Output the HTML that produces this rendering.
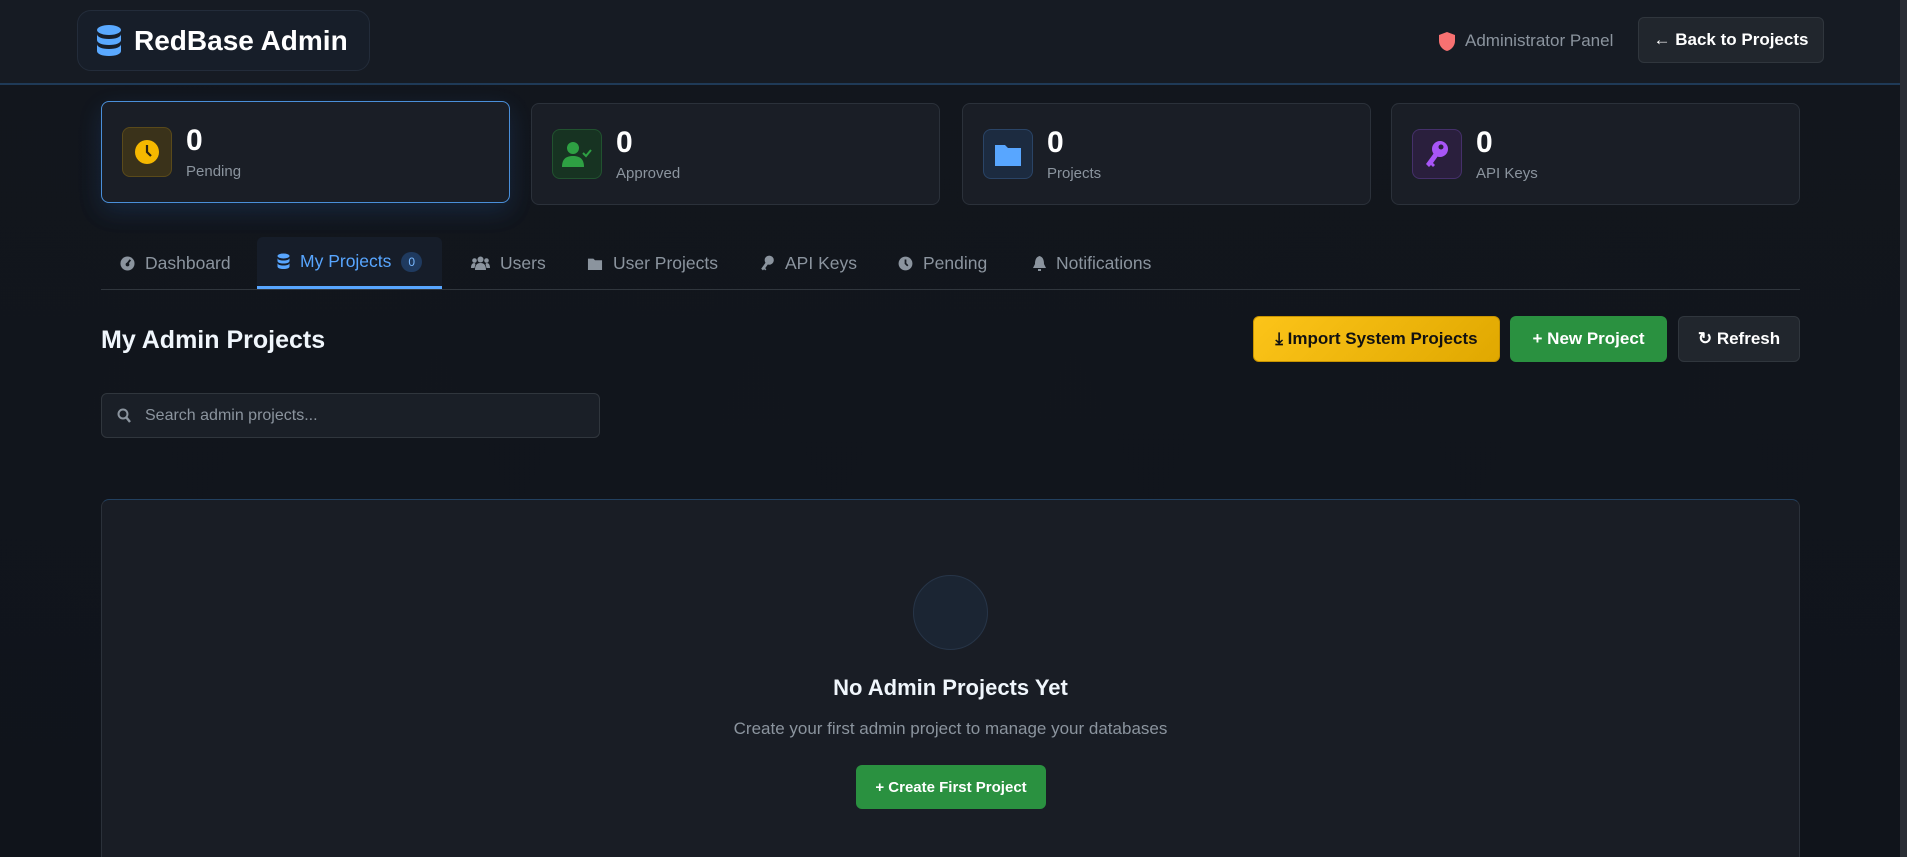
<!DOCTYPE html>
<html style="width:1907px;height:857px;overflow:hidden"><head><meta charset="utf-8"><style>
*{box-sizing:border-box;margin:0;padding:0}
body{width:1907px;height:857px;overflow:hidden;background:linear-gradient(180deg,#12161d,#10141b);font-family:"Liberation Sans",sans-serif;color:#e6edf3;position:relative}
.abs{position:absolute}
header{position:absolute;left:0;top:0;width:1900px;height:85px;background:#161b23;border-bottom:2px solid #1f3a57}
.logo{left:77px;top:10px;width:293px;height:61px;border:1px solid #232c3a;border-radius:14px;background:#171e29;display:flex;align-items:center;padding-left:18px;font-weight:bold;font-size:28px;color:#fff}
.logo svg{margin-right:12px}
.admin{left:1439px;top:31px;font-size:17px;color:#8b949e;display:flex;align-items:center;gap:10px}
.back{left:1638px;top:17px;width:186px;height:46px;background:#21262d;border:1px solid #30363d;border-radius:6px;font-size:17px;font-weight:bold;color:#fff;display:flex;align-items:center;justify-content:center;gap:8px}
.card{height:102px;top:103px;width:409px;border:1px solid #2b313a;border-radius:8px;background:#1a1e26;display:flex;align-items:center;padding-left:20px}
.card.act{top:101px;border-color:#4a8fd9;box-shadow:0 8px 24px rgba(56,139,253,.15)}
.ic{width:50px;height:50px;border-radius:8px;display:flex;align-items:center;justify-content:center;margin-right:14px}
.num{font-size:30px;font-weight:bold;color:#fff;line-height:32px}
.lbl{font-size:15px;color:#8b949e;margin-top:6px}
.tabs{left:101px;top:237px;width:1699px;height:53px;border-bottom:1px solid #30363d}
.tab{position:absolute;top:0;height:52px;display:flex;align-items:center;gap:10px;font-size:17.5px;color:#8b949e}
.tab.on{background:#161d29;color:#58a6ff;border-bottom:3px solid #58a6ff;padding:0 20px;border-radius:6px 6px 0 0}
.badge{background:#1f3a5f;color:#79b8ff;font-size:12px;border-radius:10px;padding:3px 7px}
h2{position:absolute;left:101px;top:326px;font-size:25px;font-weight:bold;color:#f0f6fc}
.btn{position:absolute;top:316px;height:46px;border-radius:6px;font-size:17px;font-weight:bold;display:flex;align-items:center;justify-content:center;gap:8px}
.search{left:101px;top:393px;width:499px;height:45px;border:1px solid #30363d;border-radius:6px;background:#1a1f27;display:flex;align-items:center;padding-left:15px;gap:14px;font-size:16px;color:#8b949e}
.empty{left:101px;top:499px;width:1699px;height:370px;border:1px solid #2b313a;border-top-color:#22405f;border-radius:8px;background:#191d25}
</style></head><body>
<header></header>
<div class="abs logo"><svg width="26" height="32" viewBox="0 0 26 32"><ellipse cx="13" cy="5" rx="12" ry="5" fill="#5aa9ff"/><path d="M1 9c0 3 5 5 12 5s12-2 12-5v6c0 3-5 5-12 5S1 18 1 15z" fill="#5aa9ff"/><path d="M1 19c0 3 5 5 12 5s12-2 12-5v7c0 3-5 5-12 5S1 29 1 26z" fill="#5aa9ff"/></svg>RedBase Admin</div>
<div class="abs admin"><svg width="16" height="19" viewBox="0 0 16 19"><path d="M8 0L16 3v6c0 5-4 9-8 10C4 18 0 14 0 9V3z" fill="#f87171"/></svg>Administrator Panel</div>
<div class="abs back">← Back to Projects</div>

<div class="abs card act" style="left:101px"><div class="ic" style="background:#3a321a;border:1px solid #5a4a1a"><svg width="26" height="26" viewBox="0 0 26 26"><circle cx="13" cy="13" r="12" fill="#f5b800"/><path d="M13 6v7l4 4" stroke="#2a2210" stroke-width="2.2" fill="none"/></svg></div><div><div class="num">0</div><div class="lbl">Pending</div></div></div>
<div class="abs card" style="left:531px"><div class="ic" style="background:#173322;border:1px solid #21522f"><svg width="30" height="26" viewBox="0 0 30 26"><circle cx="11" cy="7" r="6" fill="#2ea043"/><path d="M0 26c0-8 4-11 11-11s11 3 11 11z" fill="#2ea043"/><path d="M21 12l3 3 5-6" stroke="#2ea043" stroke-width="2" fill="none"/></svg></div><div><div class="num">0</div><div class="lbl">Approved</div></div></div>
<div class="abs card" style="left:962px"><div class="ic" style="background:#1c2b40;border:1px solid #2a4466"><svg width="26" height="24" viewBox="0 0 26 24"><path d="M0 3h10l3 3h13v18H0z" fill="#58a6ff"/></svg></div><div><div class="num">0</div><div class="lbl">Projects</div></div></div>
<div class="abs card" style="left:1391px"><div class="ic" style="background:#2a1f3d;border:1px solid #45306a"><svg width="26" height="28" viewBox="0 0 26 28"><circle cx="16" cy="9" r="8" fill="#a855f7"/><circle cx="17" cy="7" r="2.5" fill="#2a1f3d"/><path d="M10 13L2 24l3 3 2-2 2 2 2-2-2-2 5-7z" fill="#a855f7"/></svg></div><div><div class="num">0</div><div class="lbl">API Keys</div></div></div>

<div class="abs tabs">
<div class="tab" style="left:19px"><svg width="15" height="15" viewBox="0 0 16 16"><circle cx="8" cy="8" r="7.5" fill="#8b949e"/><path d="M8 8l3-4" stroke="#161b22" stroke-width="2"/><circle cx="8" cy="9" r="2" fill="#161b22"/></svg>Dashboard</div>
<div class="tab on" style="left:156px"><svg width="13" height="17" viewBox="0 0 26 32"><ellipse cx="13" cy="5" rx="12" ry="5" fill="#58a6ff"/><path d="M1 9c0 3 5 5 12 5s12-2 12-5v6c0 3-5 5-12 5S1 18 1 15z M1 19c0 3 5 5 12 5s12-2 12-5v7c0 3-5 5-12 5S1 29 1 26z" fill="#58a6ff"/></svg>My Projects <span class="badge">0</span></div>
<div class="tab" style="left:370px"><svg width="19" height="14" viewBox="0 0 19 14"><circle cx="9.5" cy="3.5" r="3" fill="#8b949e"/><circle cx="3.5" cy="4.5" r="2.3" fill="#8b949e"/><circle cx="15.5" cy="4.5" r="2.3" fill="#8b949e"/><path d="M4 14c0-5 2-7 5.5-7S15 9 15 14z M0 12c0-3 1-5 3.5-5l1 1-1 4z M19 12c0-3-1-5-3.5-5l-1 1 1 4z" fill="#8b949e"/></svg>Users</div>
<div class="tab" style="left:486px"><svg width="16" height="13" viewBox="0 0 26 24"><path d="M0 3h10l3 3h13v18H0z" fill="#8b949e"/></svg>User Projects</div>
<div class="tab" style="left:659px"><svg width="15" height="16" viewBox="0 0 26 28"><circle cx="16" cy="9" r="8" fill="#8b949e"/><path d="M10 13L2 24l3 3 2-2 2 2 2-2-2-2 5-7z" fill="#8b949e"/></svg>API Keys</div>
<div class="tab" style="left:797px"><svg width="15" height="15" viewBox="0 0 26 26"><circle cx="13" cy="13" r="12" fill="#8b949e"/><path d="M13 6v7l4 4" stroke="#161b22" stroke-width="3" fill="none"/></svg>Pending</div>
<div class="tab" style="left:932px"><svg width="13" height="15" viewBox="0 0 13 15"><path d="M6.5 0C3 1 2 4 2 8L0 12h13l-2-4c0-4-1-7-4.5-8z M5 13h3v2H5z" fill="#8b949e"/></svg>Notifications</div>
</div>

<h2>My Admin Projects</h2>
<div class="btn" style="left:1253px;width:247px;background:linear-gradient(135deg,#fcc419,#e0a800);color:#111;border:1px solid #c99400">⤓ Import System Projects</div>
<div class="btn" style="left:1510px;width:157px;background:#2a9140;color:#fff">+ New Project</div>
<div class="btn" style="left:1678px;width:122px;background:#21262d;border:1px solid #30363d;color:#fff">↻ Refresh</div>

<div class="abs search"><svg width="14" height="15" viewBox="0 0 14 15"><circle cx="6" cy="6" r="4.5" stroke="#8b949e" stroke-width="2" fill="none"/><path d="M9 9l4 5" stroke="#8b949e" stroke-width="2.4"/></svg>Search admin projects...</div>

<div class="abs empty">
<div class="abs" style="left:811px;top:75px;width:75px;height:75px;border-radius:50%;background:#1b2533;border:1px solid #273548"></div>
<div class="abs" style="left:0;width:100%;top:175px;text-align:center;font-size:22px;font-weight:bold;color:#f0f6fc">No Admin Projects Yet</div>
<div class="abs" style="left:0;width:100%;top:219px;text-align:center;font-size:17px;color:#8b949e">Create your first admin project to manage your databases</div>
<div class="abs" style="left:754px;top:265px;width:190px;height:44px;border-radius:6px;background:#2a9140;color:#fff;font-weight:bold;font-size:15px;display:flex;align-items:center;justify-content:center">+ Create First Project</div>
</div>
<div class="abs" style="left:1900px;top:0;width:7px;height:857px;background:#2a2e35"></div>
</body></html>
